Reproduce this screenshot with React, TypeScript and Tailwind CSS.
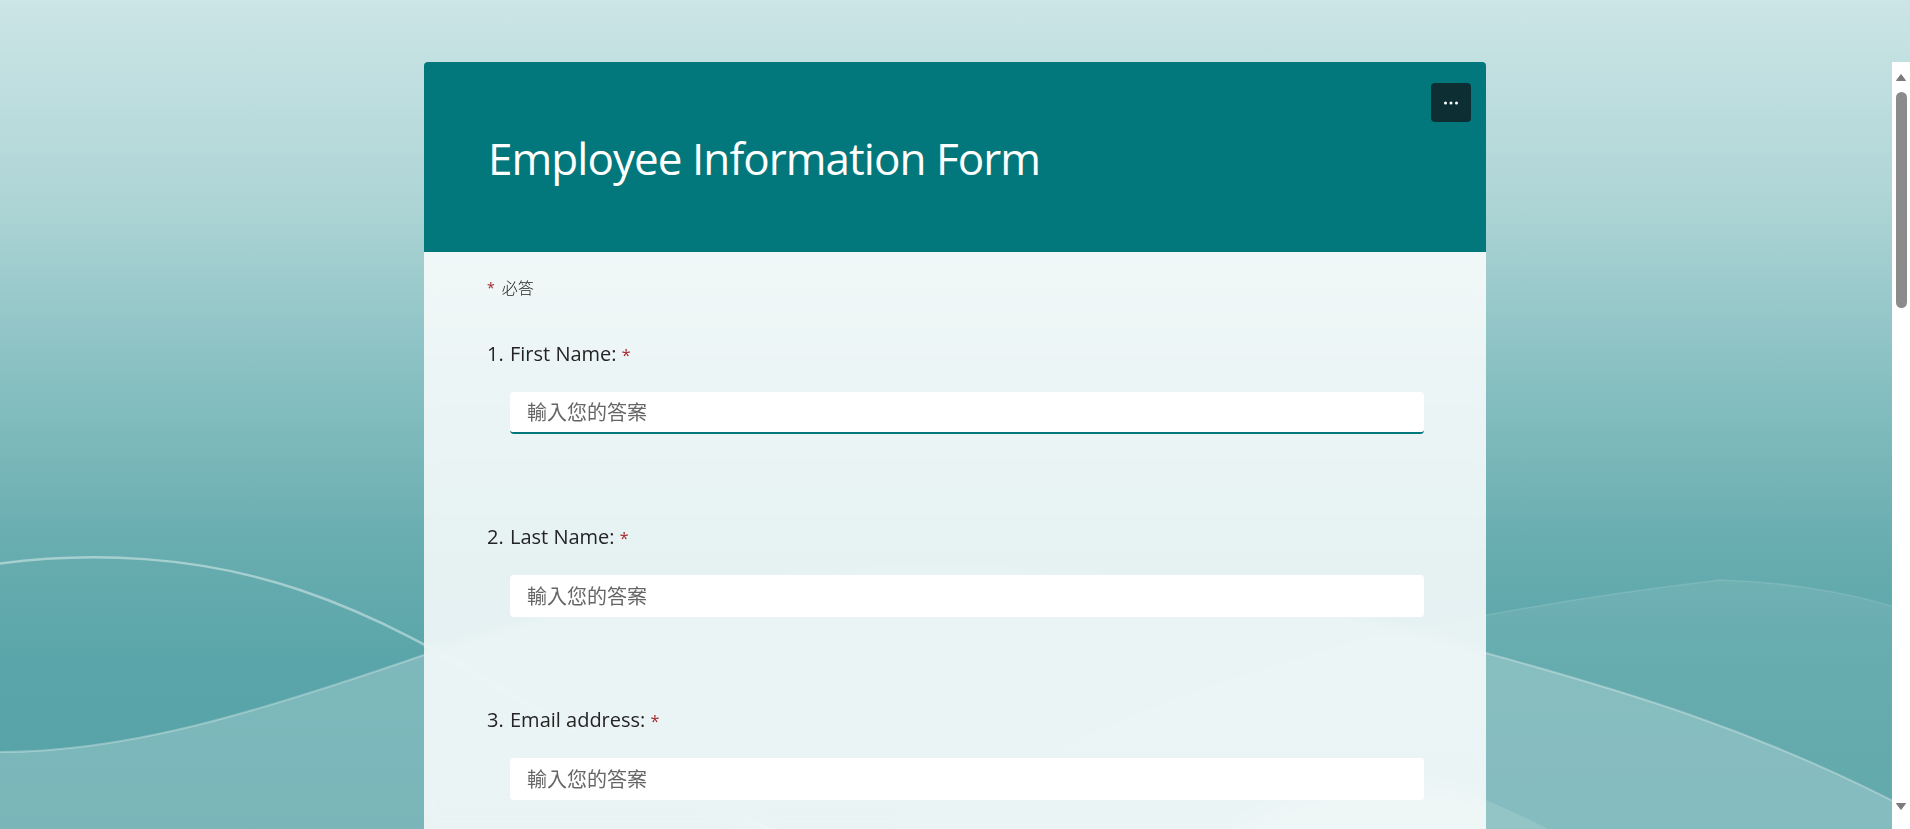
import React from "react";

const questions = [
  { n: "1.", label: "First Name:", focused: true },
  { n: "2.", label: "Last Name:", focused: false },
  { n: "3.", label: "Email address:", focused: false },
];

function Background() {
  return (
    <svg
      className="absolute inset-0 h-full w-full"
      viewBox="0 0 1910 829"
      preserveAspectRatio="none"
    >
      <defs>
        <linearGradient id="sky" x1="0" y1="0" x2="0" y2="1">
          <stop offset="0" stopColor="#cce5e6" />
          <stop offset="0.23" stopColor="#b0d6d7" />
          <stop offset="0.46" stopColor="#87bfc1" />
          <stop offset="0.66" stopColor="#68adb0" />
          <stop offset="0.8" stopColor="#5aa5a9" />
          <stop offset="1" stopColor="#55a2a6" />
        </linearGradient>
      </defs>
      <rect width="1910" height="829" fill="url(#sky)" />
      {/* right hill */}
      <path
        d="M850,860 C1050,720 1300,630 1720,580 C1800,582 1870,598 1910,612 L1920,860 Z"
        fill="#fff"
        fillOpacity="0.08"
        stroke="#fff"
        strokeOpacity="0.12"
        strokeWidth="1.5"
      />
      {/* long lower wave */}
      <path
        d="M-10,752 C120,754 250,715 424,655 C700,560 1100,540 1486,653 C1620,690 1760,730 1920,815 L1920,840 L-10,840 Z"
        fill="#fff"
        fillOpacity="0.22"
        stroke="#fff"
        strokeOpacity="0.3"
        strokeWidth="2"
      />
      {/* thin upper line */}
      <path
        d="M-10,565 C90,550 200,556 300,590 C380,617 440,652 520,700 C640,770 740,820 820,850"
        fill="none"
        stroke="#fff"
        strokeOpacity="0.42"
        strokeWidth="2.5"
      />
      {/* bottom right corner sliver */}
      <path
        d="M1200,850 C1300,775 1420,770 1486,800 C1520,815 1550,828 1575,845 Z"
        fill="#fff"
        fillOpacity="0.12"
      />
    </svg>
  );
}

function Scrollbar() {
  return (
    <div className="mt-[62px] flex w-[18px] flex-col items-center bg-white">
      <svg width="10" height="7" viewBox="0 0 10 7" className="mt-[12px]">
        <path d="M5 0.5 L9.5 6.5 L0.5 6.5 Z" fill="#7b7b7b" stroke="#7b7b7b" strokeLinejoin="round" />
      </svg>
      <div className="mt-[11px] h-[216px] w-[11px] rounded-full bg-[#8b8b8b]" />
      <svg width="10" height="7" viewBox="0 0 10 7" className="mt-auto mb-[19px]">
        <path d="M0.5 0.5 L9.5 0.5 L5 6.5 Z" fill="#7b7b7b" stroke="#7b7b7b" strokeLinejoin="round" />
      </svg>
    </div>
  );
}

export default function App() {
  return (
    <div className="relative h-[829px] w-full overflow-hidden font-['Segoe_UI','Open_Sans','Noto_Sans_CJK_TC',sans-serif]">
      <Background />
      <div className="relative flex h-full">
        <main className="flex-1 pt-[62px] pl-[424px]">
          <div className="w-[1062px]">
            <header className="flex h-[190px] justify-between rounded-t-[4px] bg-[#03787c]">
              <h1 className="pl-[64px] pt-[68px] text-[44px] font-normal leading-[57px] tracking-[-0.95px] text-white">
                Employee Information Form
              </h1>
              <button className="mt-[21px] mr-[15px] flex h-[39px] w-[40px] items-center justify-center rounded-[4px] bg-[#0d2f33]">
                <svg width="16" height="4" viewBox="0 0 16 4">
                  <circle cx="2.5" cy="2" r="1.5" fill="#fff" />
                  <circle cx="8" cy="2" r="1.5" fill="#fff" />
                  <circle cx="13.5" cy="2" r="1.5" fill="#fff" />
                </svg>
              </button>
            </header>
            <section className="bg-white/[0.84] pt-[25px] pr-[62px] pb-[87px] pl-[63px] backdrop-blur-[6px]">
              <div className="flex items-center text-[16px] leading-[22px] text-[#242424]">
                <span className="mr-[7px] text-[14px] text-[#a4262c]">*</span>
                <span className="font-light">必答</span>
              </div>
              <div className="mt-[41px] flex flex-col gap-[89px]">
                {questions.map((q) => (
                  <div key={q.n}>
                    <div className="flex text-[20px] leading-[28px] text-[#242424]">
                      <span className="w-[23px]">{q.n}</span>
                      <span>
                        {q.label}{" "}
                        <span className="text-[16px] text-[#a4262c]">*</span>
                      </span>
                    </div>
                    <input
                      placeholder="輸入您的答案"
                      className={
                        q.focused
                          ? "mt-[23px] ml-[23px] block h-[42px] w-[914px] rounded-[4px] border-b-2 border-[#03787c] bg-white pl-[17px] text-[20px] outline-none placeholder:text-[#666666]"
                          : "mt-[23px] ml-[23px] block h-[42px] w-[914px] rounded-[4px] bg-white pl-[17px] text-[20px] outline-none placeholder:text-[#666666]"
                      }
                    />
                  </div>
                ))}
              </div>
            </section>
          </div>
        </main>
        <Scrollbar />
      </div>
    </div>
  );
}
